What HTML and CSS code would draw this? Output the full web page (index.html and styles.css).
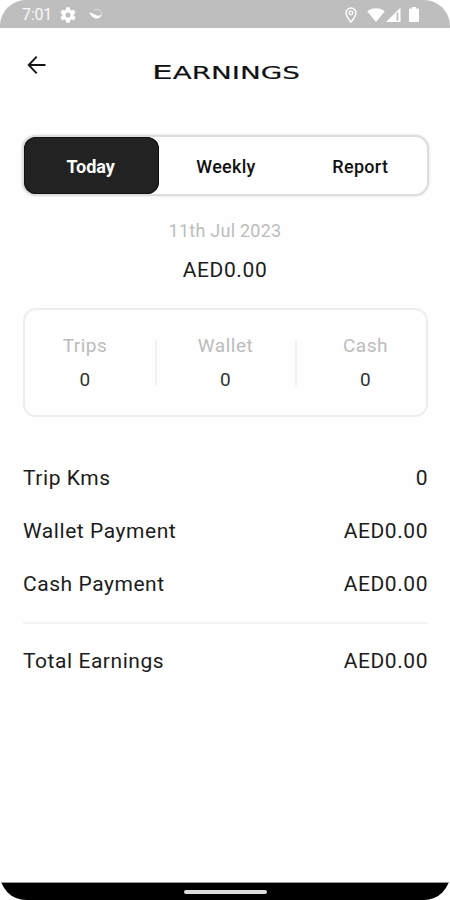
FILE: index.html
```html
<!DOCTYPE html>
<html lang="en">
<head>
<meta charset="utf-8">
<title>Earnings</title>
<link rel="stylesheet" href="styles.css">
</head>
<body>
<div class="phone">
  <header class="status">
    <span class="clock">7:01</span>
    <svg class="gear" width="16" height="16" viewBox="2 2 20 20"><path fill="#fff" d="M19.14 12.94c.04-.3.06-.61.06-.94s-.02-.64-.07-.94l2.03-1.58a.49.49 0 0 0 .12-.61l-1.92-3.32a.49.49 0 0 0-.59-.22l-2.39.96a7 7 0 0 0-1.62-.94l-.36-2.54a.48.48 0 0 0-.48-.41h-3.84a.48.48 0 0 0-.47.41l-.36 2.54a7.400 7.400 0 0 0-1.620.940l-2.390-.960a.48.48 0 0 0-.59.220L2.740 8.870a.48.48 0 0 0 .12.610l2.030 1.580a6 6 0 0 0 0 1.880l-2.030 1.580a.49.49 0 0 0-.12.610l1.920 3.320c.12.220.37.290.59.220l2.390-.960c.5.380 1.030.700 1.620.940l.36 2.540c.05.240.24.410.48.410h3.840c.24 0 .44-.17.47-.41l.36-2.540c.59-.24 1.130-.560 1.620-.940l2.390.960c.22.080.47 0 .59-.22l1.920-3.320a.48.48 0 0 0-.12-.610zM12 15.200a3.200 3.200 0 1 1 0-6.400 3.200 3.200 0 0 1 0 6.400z"/></svg>
    <svg class="swirl" width="14" height="13" viewBox="0 0 14 13" fill="none"><path d="M0 4.500C3 4.500 5.500 6.800 8 7.500c2 .4 3.500-.1 4.500-1.300-.3 3.200-3 4.700-6 4.200C4 9.900 2 7.500 0 4.500z" fill="#fff"/><path d="M5 2C8.500.2 12.800 2.500 12.800 7" stroke="#dedede"/></svg>
    <span class="grow"></span>
    <svg class="pin" width="12" height="16" viewBox="0 0 12 16" fill="none" stroke="#fff"><path stroke-width="1.400" d="M6 15C3 11.500 1 8.800 1 6a5 5 0 0 1 10 0c0 2.800-2 5.500-5 9z"/><circle cx="6" cy="6" r="1.800" stroke-width="1.300"/></svg>
    <svg class="wifi" width="18" height="14" viewBox="0 0 18 14"><path fill="#fff" d="M9 14 .3 3.200C5-.9 13-.9 17.700 3.200z"/></svg>
    <svg class="signal" width="15" height="15" viewBox="0 0 15 15"><path fill="#fff" fill-rule="evenodd" d="M0 15 14.500.5V15zM10.500 6v7.500h1.800V5z"/></svg>
    <svg class="battery" width="10" height="15" viewBox="0 0 10 15"><path fill="#fff" d="M3 0h4v1.500h2a1 1 0 0 1 1 1V14a1 1 0 0 1-1 1H1a1 1 0 0 1-1-1V2.500a1 1 0 0 1 1-1h2z"/></svg>
  </header>
  <div class="topbar">
    <svg class="back" width="20" height="20" viewBox="0 0 20 20" fill="none" stroke="#151515" stroke-width="1.900"><path d="M18.500 10H2M9.700 1.700 1.700 10l8 8.300"/></svg>
    <svg class="title" width="150" height="24" viewBox="0 0 150 24"><text y="19.300" x="1" textLength="148" lengthAdjust="spacingAndGlyphs"><tspan class="cap">E</tspan>ARNINGS</text></svg>
  </div>
  <nav class="tabs"><span class="tab active">Today</span><span class="tab">Weekly</span><span class="tab">Report</span></nav>
  <div class="date">11th Jul 2023</div>
  <div class="amount">AED0.00</div>
  <section class="card">
    <div class="stat"><span>Trips</span><b>0</b></div>
    <div class="stat"><span>Wallet</span><b>0</b></div>
    <div class="stat"><span>Cash</span><b>0</b></div>
  </section>
  <section class="rows">
    <div class="row"><span>Trip Kms</span><span>0</span></div>
    <div class="row"><span>Wallet Payment</span><span>AED0.00</span></div>
    <div class="row"><span>Cash Payment</span><span>AED0.00</span></div>
    <div class="row total"><span>Total Earnings</span><span>AED0.00</span></div>
  </section>
  <footer class="navbar"><i class="handle"></i></footer>
</div>
</body>
</html>
```
FILE: styles.css
```css
* { box-sizing: border-box; }
body { margin: 0; background: #fff; font-family: Roboto, sans-serif; color: #1c1c1c; }
.phone { width: 450px; height: 900px; display: flex; flex-direction: column; overflow: hidden; border-radius: 26px; background: #fefefe; }
.status { height: 28px; flex: none; background: #bebebe; display: flex; align-items: center; padding: 1px 31px 0 22px; }
.clock { color: #f8f8f8; font-size: 16px; width: 38px; letter-spacing: -.2px; }
.swirl { margin-left: 13px; }
.grow { flex: 1; }
.wifi { margin-left: 10px; }
.signal { margin-left: 1px; }
.battery { margin-left: 8px; }
.topbar { height: 107px; flex: none; display: flex; align-items: flex-start; padding: 27px 0 0 27px; }
.title { margin: 5px 0 0 104px; overflow: visible; }
.title text { font-family: "DejaVu Sans", sans-serif; font-size: 17px; fill: #111; stroke: #111; stroke-width: .15px; }
.title .cap { font-size: 20px; }
.tabs { flex: none; width: 407px; height: 61px; margin-left: 22px; border: 2px solid #dedede; border-radius: 14px; display: flex; box-shadow: 0 0 3px #ddd; background: #fff; }
.tab { flex: 1; display: flex; align-items: center; justify-content: center; font-size: 18px; font-weight: 500; letter-spacing: .3px; color: #111; padding-top: 2px; }
.tab:last-child { padding-left: 1px; }
.active { background: #222; color: #fff; font-weight: 700; letter-spacing: 0; border-radius: 12px; box-shadow: inset 0 0 0 1px #111; padding-right: 2px; }
.date { margin-top: 24px; line-height: 22px; font-size: 18px; letter-spacing: .25px; text-align: center; color: #bcbcbc; }
.amount { margin-top: 15px; line-height: 26px; font-size: 21px; letter-spacing: .6px; text-align: center; }
.card { flex: none; margin: 25px 22px 0 23px; height: 109px; border: 2px solid #ededed; border-radius: 13px; display: flex; align-items: center; }
.stat { height: 46px; flex: 0 0 140px; display: flex; flex-direction: column; align-items: center; justify-content: center; gap: 12px; font-size: 19px; line-height: 22px; letter-spacing: .5px; color: #bcbcbc; padding-right: 1px; }
.stat:first-child { flex-basis: 130px; padding-right: 10px; }
.stat + .stat { border-left: 2px solid #f1f1f1; }
.stat b { font-weight: 400; color: #333; }
.rows { margin: 34px 22px 0 23px; }
.row { height: 53.300px; display: flex; align-items: center; justify-content: space-between; font-size: 21px; letter-spacing: .55px; }
.total { border-top: 2px solid #f3f3f3; height: 77px; margin-top: 11px; }
.navbar { margin-top: auto; height: 18px; background: #000; border-top: 1px solid #999; display: flex; justify-content: center; align-items: center; }
.handle { width: 83px; height: 4px; border-radius: 2px; background: #ddd; }
```
